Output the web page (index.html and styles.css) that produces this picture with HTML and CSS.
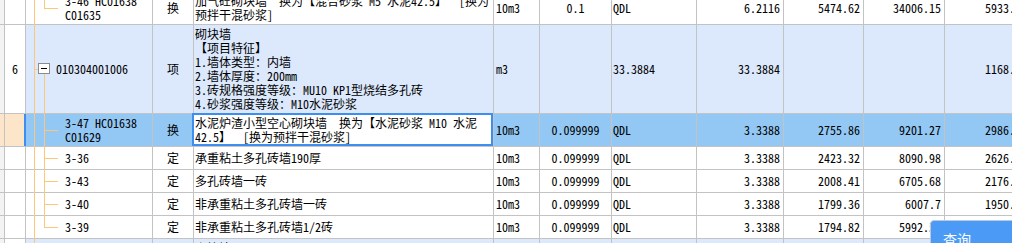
FILE: index.html
```html
<!DOCTYPE html>
<html lang="zh-CN">
<head>
<meta charset="utf-8">
<title>清单</title>
<link rel="stylesheet" href="styles.css">
</head>
<body>
<div class="sheet">
  <div class="row">
    <div class="c c0"></div>
    <div class="c c1"></div>
    <div class="c c2 code child"><span class="tl v1"></span><span class="tl v2 last"></span><span class="tl h"></span><span>3-46 HC01638 C01635</span></div>
    <div class="c c3 mid">换</div>
    <div class="c c4">加气砼砌块墙&nbsp; 换为【混合砂浆 M5 水泥42.5】&nbsp; [换为预拌干混砂浆]</div>
    <div class="c c5">10m3</div>
    <div class="c c6 mid">0.1</div>
    <div class="c c7">QDL</div>
    <div class="c c8 num">6.2116</div>
    <div class="c c9 num">5474.62</div>
    <div class="c c10 num">34006.15</div>
    <div class="c c11 num">5933.68</div>
  </div>
  <div class="row group">
    <div class="c c0"></div>
    <div class="c c1 mid">6</div>
    <div class="c c2 code parent"><span class="tl v1"></span><span class="tl hc"></span><span class="box"></span><span class="tl v2 down"></span><span>010304001006</span></div>
    <div class="c c3 mid">项</div>
    <div class="c c4">砌块墙<br>【项目特征】<br>1.墙体类型：内墙<br>2.墙体厚度：200mm<br>3.砖规格强度等级：MU10 KP1型烧结多孔砖<br>4.砂浆强度等级：M10水泥砂浆</div>
    <div class="c c5">m3</div>
    <div class="c c6 mid"></div>
    <div class="c c7">33.3884</div>
    <div class="c c8 num">33.3884</div>
    <div class="c c9 num"></div>
    <div class="c c10 num"></div>
    <div class="c c11 num">1168.51</div>
  </div>
  <div class="row sel">
    <div class="c c0"></div>
    <div class="c c1"></div>
    <div class="c c2 code child"><span class="tl v1"></span><span class="tl v2"></span><span class="tl h"></span><span>3-47 HC01638 C01629</span></div>
    <div class="c c3 mid">换</div>
    <div class="c c4 edit">水泥炉渣小型空心砌块墙&nbsp; 换为【水泥砂浆 M10 水泥42.5】&nbsp; [换为预拌干混砂浆]</div>
    <div class="c c5">10m3</div>
    <div class="c c6 mid">0.099999</div>
    <div class="c c7">QDL</div>
    <div class="c c8 num">3.3388</div>
    <div class="c c9 num">2755.86</div>
    <div class="c c10 num">9201.27</div>
    <div class="c c11 num">2986.74</div>
  </div>
  <div class="row">
    <div class="c c0"></div>
    <div class="c c1"></div>
    <div class="c c2 code child"><span class="tl v1"></span><span class="tl v2"></span><span class="tl h"></span><span>3-36</span></div>
    <div class="c c3 mid">定</div>
    <div class="c c4">承重粘土多孔砖墙190厚</div>
    <div class="c c5">10m3</div>
    <div class="c c6 mid">0.099999</div>
    <div class="c c7">QDL</div>
    <div class="c c8 num">3.3388</div>
    <div class="c c9 num">2423.32</div>
    <div class="c c10 num">8090.98</div>
    <div class="c c11 num">2626.14</div>
  </div>
  <div class="row">
    <div class="c c0"></div>
    <div class="c c1"></div>
    <div class="c c2 code child"><span class="tl v1"></span><span class="tl v2"></span><span class="tl h"></span><span>3-43</span></div>
    <div class="c c3 mid">定</div>
    <div class="c c4">多孔砖墙一砖</div>
    <div class="c c5">10m3</div>
    <div class="c c6 mid">0.099999</div>
    <div class="c c7">QDL</div>
    <div class="c c8 num">3.3388</div>
    <div class="c c9 num">2008.41</div>
    <div class="c c10 num">6705.68</div>
    <div class="c c11 num">2176.27</div>
  </div>
  <div class="row">
    <div class="c c0"></div>
    <div class="c c1"></div>
    <div class="c c2 code child"><span class="tl v1"></span><span class="tl v2"></span><span class="tl h"></span><span>3-40</span></div>
    <div class="c c3 mid">定</div>
    <div class="c c4">非承重粘土多孔砖墙一砖</div>
    <div class="c c5">10m3</div>
    <div class="c c6 mid">0.099999</div>
    <div class="c c7">QDL</div>
    <div class="c c8 num">3.3388</div>
    <div class="c c9 num">1799.36</div>
    <div class="c c10 num">6007.7</div>
    <div class="c c11 num">1950.53</div>
  </div>
  <div class="row">
    <div class="c c0"></div>
    <div class="c c1"></div>
    <div class="c c2 code child"><span class="tl v1"></span><span class="tl v2 last"></span><span class="tl h"></span><span>3-39</span></div>
    <div class="c c3 mid">定</div>
    <div class="c c4">非承重粘土多孔砖墙1/2砖</div>
    <div class="c c5">10m3</div>
    <div class="c c6 mid">0.099999</div>
    <div class="c c7">QDL</div>
    <div class="c c8 num">3.3388</div>
    <div class="c c9 num">1794.82</div>
    <div class="c c10 num">5992.55</div>
    <div class="c c11 num">1945.62</div>
  </div>
  <div class="row group">
    <div class="c c0"></div>
    <div class="c c1 mid">7</div>
    <div class="c c2 code parent"><span class="tl v1"></span><span>010304001007</span></div>
    <div class="c c3 mid">项</div>
    <div class="c c4">砌块墙<br>【项目特征】<br>1.墙体类型：外墙<br>2.墙体厚度：200mm</div>
    <div class="c c5">m3</div>
    <div class="c c6 mid"></div>
    <div class="c c7"></div>
    <div class="c c8 num"></div>
    <div class="c c9 num"></div>
    <div class="c c10 num"></div>
    <div class="c c11 num"></div>
  </div>
</div>
<div class="query">查询</div>
</body>
</html>
```

FILE: styles.css
```css
html, body {
  margin: 0;
  padding: 0;
  overflow: hidden;
  background: #ffffff;
}

body {
  font-family: "Noto Sans Mono CJK SC", "Noto Sans CJK SC", sans-serif;
  font-size: 12px;
  line-height: 14px;
  color: #000000;
}

.sheet {
  margin-top: -8px;
  width: 1035px;
}

.row {
  display: flex;
  border-bottom: 1px solid #c3c3c3;
}

.c {
  box-sizing: border-box;
  flex: none;
  display: flex;
  align-items: center;
  min-height: 22px;
  padding: 2px 0;
  border-right: 1px solid #c3c3c3;
  background: #ffffff;
  white-space: normal;
}

.c0 { width: 5px; background: #f3f3f3; }
.c1 { width: 21px; }
.c2 { width: 127px; }
.c3 { width: 41px; }
.c4 { width: 300px; padding-left: 1px; display: block; align-self: stretch; display: flex; }
.c5 { width: 46px; padding-left: 2px; }
.c6 { width: 72px; }
.c7 { width: 85px; padding-left: 1px; }
.c8 { width: 87px; }
.c9 { width: 80px; }
.c10 { width: 81px; }
.c11 { width: 86px; }

.mid { justify-content: center; text-align: center; }
.num { justify-content: flex-end; padding-right: 3px; }

/* group (item) rows */
.group .c { background: #dce9fc; }
.group .c0 { background: #f3f3f3; }
.group .c1 { background: #ffffff; }

/* selected row */
.sel .c { background: #93c8f5; }
.sel .c0, .sel .c1 { background: #fde5c9; }
.sel .c1 { border-right: 2px solid #3d8ef0; }
.sel .c4.edit {
  background: #ffffff;
  position: relative;
}
.sel .c4.edit::after {
  content: "";
  position: absolute;
  left: -2px;
  top: -1px;
  right: 0;
  bottom: 0;
  border: 2px solid #3d8ef0;
}

/* tree column */
.code {
  position: relative;
  padding-left: 39px;
  padding-right: 2px;
}
.code.parent { padding-left: 30px; }

.tl {
  position: absolute;
  background: #fcc77b;
}
.tl.v1 { left: 8px; top: 0; bottom: -1px; width: 1px; }
.tl.v2 { left: 18px; top: 0; bottom: -1px; width: 1px; }
.tl.v2.last { bottom: 50%; }
.tl.v2.down { top: calc(50% + 5px); }
.tl.h { left: 18px; top: 50%; width: 14px; height: 1px; }
.tl.hc { left: 8px; top: 50%; width: 4px; height: 1px; }

.box {
  position: absolute;
  left: 12px;
  top: 50%;
  margin-top: -6px;
  width: 12px;
  height: 11px;
  box-sizing: border-box;
  border: 1px solid #8c8c8c;
  background: #ffffff;
}
.box::after {
  content: "";
  position: absolute;
  left: 2px;
  right: 2px;
  top: 4px;
  height: 1px;
  background: #000000;
}

/* floating query button */
.query {
  position: absolute;
  left: 930px;
  top: 220px;
  width: 100px;
  height: 40px;
  box-sizing: border-box;
  padding: 10px 0 0 12px;
  background: #4b9af5;
  border: 1px solid #b9c9de;
  border-radius: 4px 0 0 0;
  color: #ffffff;
  font-family: "Noto Sans CJK SC", sans-serif;
  font-size: 14px;
  line-height: 16px;
}
```
